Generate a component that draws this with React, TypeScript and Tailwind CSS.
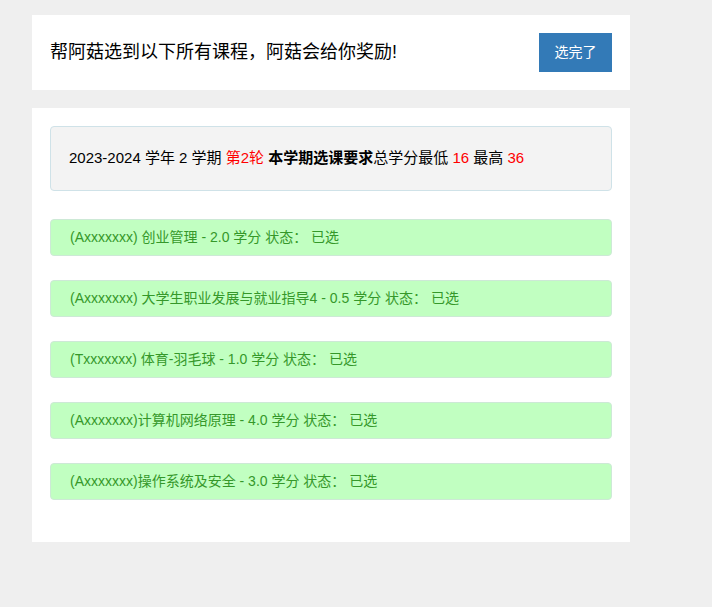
const courses = [
  "(Axxxxxxx) 创业管理 - 2.0 学分 状态： 已选",
  "(Axxxxxxx) 大学生职业发展与就业指导4 - 0.5 学分 状态： 已选",
  "(Txxxxxxx) 体育-羽毛球 - 1.0 学分 状态： 已选",
  "(Axxxxxxx)计算机网络原理 - 4.0 学分 状态： 已选",
  "(Axxxxxxx)操作系统及安全 - 3.0 学分 状态： 已选",
];

export default function App() {
  return (
    <div
      className="min-h-[607px] bg-[#efefef] pt-[15px] pl-[32px]"
      style={{ fontFamily: '"Liberation Sans", "Noto Sans CJK SC", sans-serif' }}
    >
      <div className="w-[598px]">
        <div className="bg-white h-[75px] flex items-center justify-between px-[18px]">
          <h1 className="text-[18px] text-black">帮阿菇选到以下所有课程，阿菇会给你奖励!</h1>
          <button className="bg-[#337ab7] text-white text-[14px] w-[73px] h-[39px]">选完了</button>
        </div>

        <div className="bg-white mt-[18px] px-[18px] pt-[18px] pb-[42px]">
          <div className="h-[65px] bg-[#f3f3f3] border border-[#cfe2e8] rounded flex items-center px-[18px] text-[15px] text-black">
            <span>
              2023-2024 学年 2 学期 <span className="text-[#ff0000]">第2轮</span>{" "}
              <b className="font-bold">本学期选课要求</b>总学分最低 <span className="text-[#ff0000]">16</span> 最高{" "}
              <span className="text-[#ff0000]">36</span>
            </span>
          </div>

          <div className="mt-[28px] flex flex-col gap-[24px]">
            {courses.map((c) => (
              <div
                key={c}
                className="h-[37px] bg-[#c1ffc1] border border-[#cde9d6] rounded flex items-center px-[19px] text-[14px] text-[#35982a]"
              >
                {c}
              </div>
            ))}
          </div>
        </div>
      </div>
    </div>
  );
}
